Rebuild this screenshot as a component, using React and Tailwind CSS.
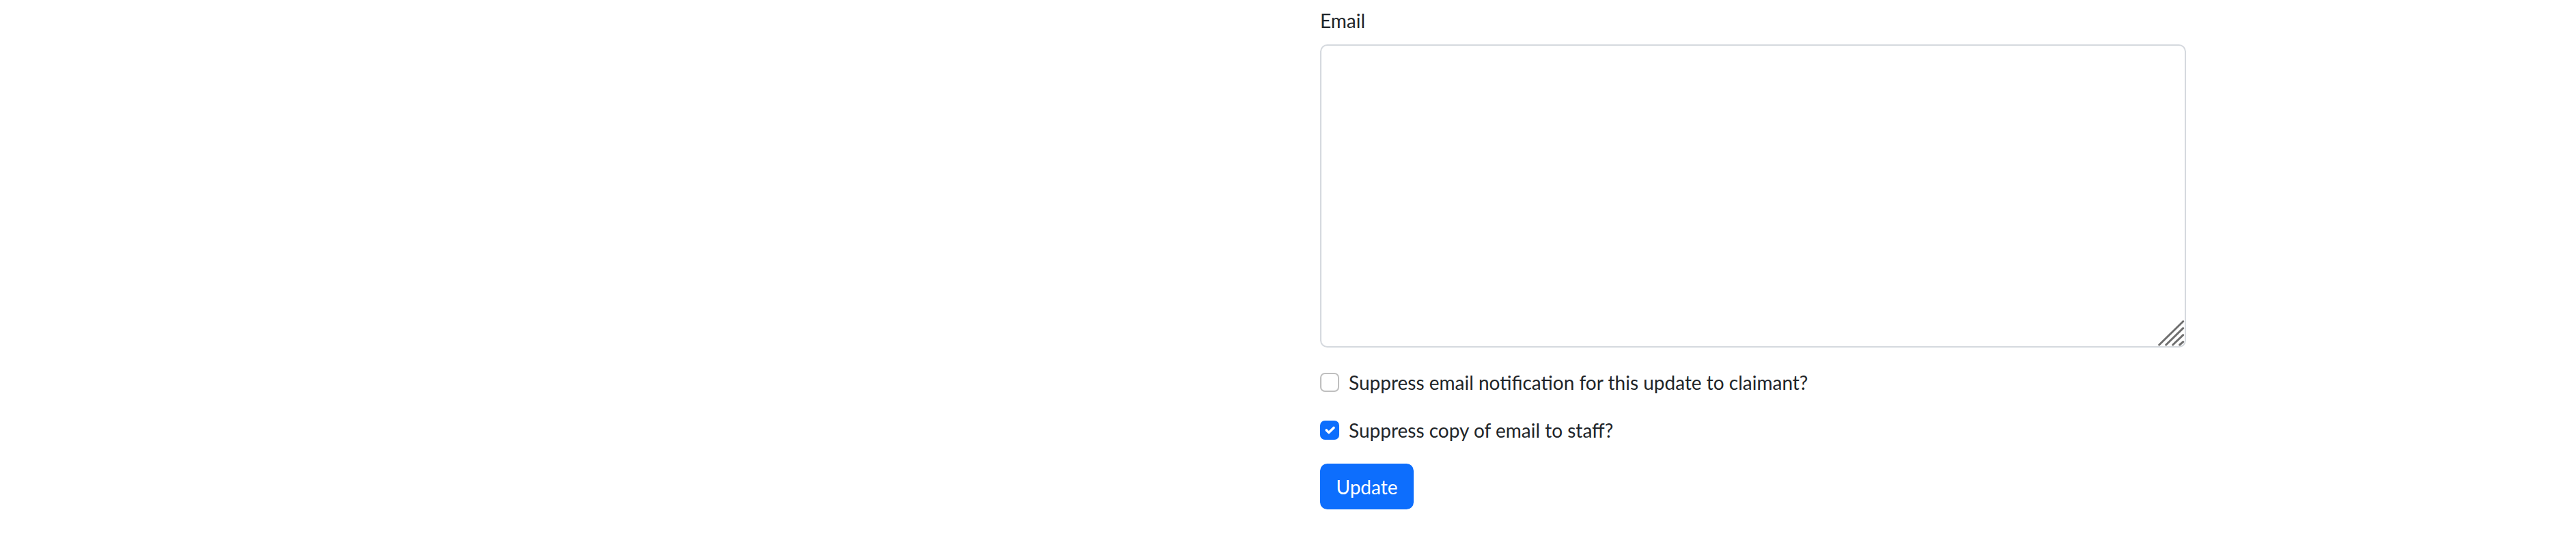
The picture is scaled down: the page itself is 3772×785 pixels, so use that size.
import React from "react";

function Check({ checked, label }) {
  return (
    <label className="flex h-[42px] mb-[28px] items-start cursor-pointer">
      <span
        className={
          checked
            ? "mt-[7px] flex h-[28px] w-[28px] shrink-0 items-center justify-center rounded-[7px] border-[2px] border-[#0d6efd] bg-[#0d6efd]"
            : "mt-[7px] flex h-[28px] w-[28px] shrink-0 items-center justify-center rounded-[7px] border-[2px] border-[#bfbfbf] bg-white"
        }
      >
        {checked && (
          <svg viewBox="0 0 20 20" className="h-[28px] w-[28px]" fill="none">
            <path d="m6 10 3 3 6-6" stroke="#fff" strokeWidth="3" strokeLinecap="round" strokeLinejoin="round" />
          </svg>
        )}
      </span>
      <span className="ml-[14px] leading-[42px]">{label}</span>
    </label>
  );
}

export default function App() {
  return (
    <div className="min-h-[785px] w-full bg-white pt-[9px] font-['Lato',sans-serif] text-[28px] leading-[42px] text-[#212529]">
      <form className="ml-[1933px] w-[1268px]">
        <label className="mb-[14px] block h-[42px] leading-[42px]">Email</label>
        <div className="relative mb-[30px]">
          <textarea className="block h-[444px] w-full resize-none rounded-[10.5px] border-[2px] border-[#d5d9de] bg-white px-[21px] py-[10.5px] outline-none" />
          <svg
            viewBox="0 0 40 40"
            className="pointer-events-none absolute bottom-[2px] right-[2px] h-[40px] w-[40px]"
            fill="none"
            stroke="#6f6f6f"
            strokeWidth="3"
            strokeLinecap="round"
          >
            <path d="M2.7 38 L37.7 3.7" />
            <path d="M12.7 38 L37.7 13.7" />
            <path d="M22.7 38 L37.7 23.7" />
            <path d="M32.7 38 L37.7 33.7" />
          </svg>
        </div>
        <Check checked={false} label="Suppress email notification for this update to claimant?" />
        <Check checked={true} label="Suppress copy of email to staff?" />
        <button
          type="button"
          className="flex h-[67px] w-[137px] items-center justify-center rounded-[10.5px] border-[2px] border-[#0d6efd] bg-[#0d6efd] text-[28px] leading-[42px] text-white"
        >
          Update
        </button>
      </form>
    </div>
  );
}
